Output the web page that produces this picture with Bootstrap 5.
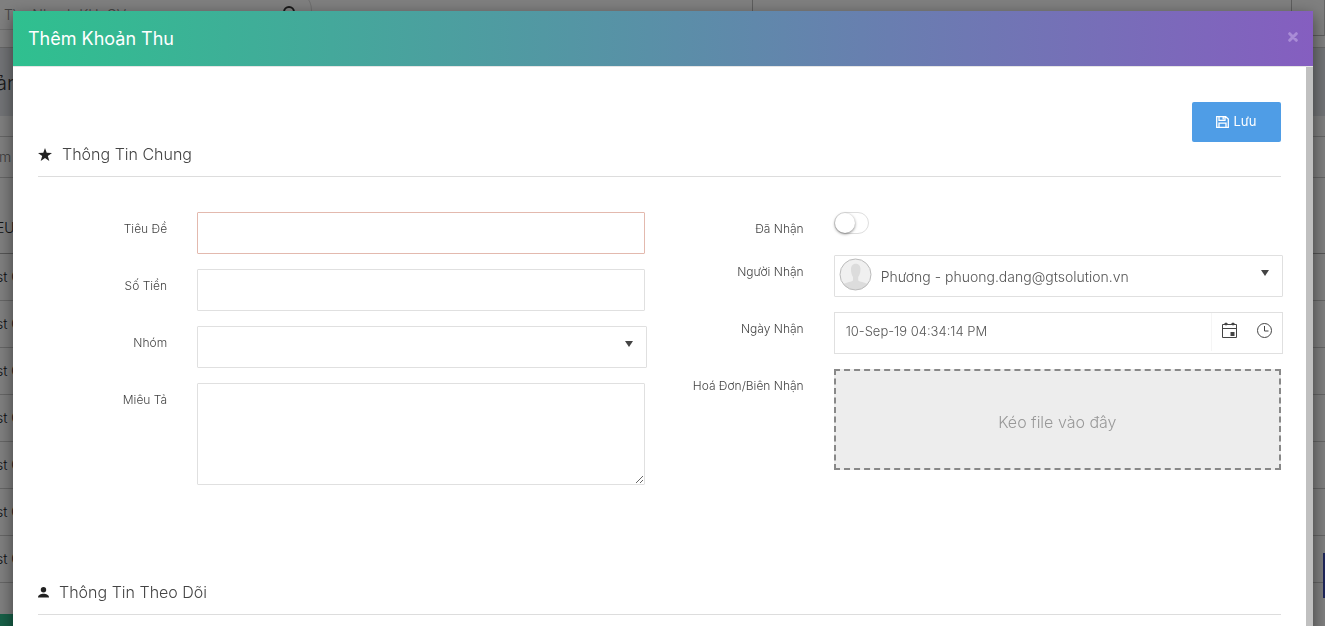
<!DOCTYPE html>
<html lang="vi">
<head>
<meta charset="utf-8">
<meta name="viewport" content="width=device-width, initial-scale=1">
<title>Thêm Khoản Thu</title>
<link href="https://cdn.jsdelivr.net/npm/bootstrap@5.3.0/dist/css/bootstrap.min.css" rel="stylesheet">
<style>
  body { font-family: Inter, "Open Sans", sans-serif; font-size: 14px; font-weight: 300; color: #333; }
  a, button, input, select, textarea { font-weight: inherit; }

  /* Page behind the dialog */
  .page-top { height: 48px; border-bottom: 1px solid #ccc; }
  .search-pill { width: 312px; height: 40px; margin-top: -10px; padding: 10px 12px 0 4px; border: 1px solid #ddd; border-left: 0; border-radius: 0 20px 20px 0; }
  .search-pill input { width: 100%; height: 26px; border: 0; padding: 0; background: none; }
  .search-pill input::placeholder { color: #888; }
  .top-cell { border-left: 1px solid #bbb; }
  .top-side { width: 573px; }
  .top-user { width: 34px; border-right: 1px solid #ccc; height: 36px; border-bottom: 1px solid #bbb; }
  .page-main { margin-left: -4px; }
  .page-title { height: 68px; background: #e4e7ec; font-size: 20px; padding-top: 20px; }
  .page-filter { height: 42px; margin-top: 20px; border: 1px solid #ccc; border-width: 1px 0; padding: 9px 3px; color: #777; }
  .page-table { margin: 0; --bs-table-bg: transparent; }
  .page-table th, .page-table td { height: 47px; padding: 0; vertical-align: middle; border-bottom: 1px solid #ccc; }
  .page-table th { height: 75px; padding-top: 25px; font-weight: 300; border-bottom-color: #aaa; }
  .page-foot { margin-top: 31px; height: 40px; width: 60px; background: #2fc08f; }
  .chat-tab { right: 0; top: 553px; width: 2px; height: 45px; background: #3d4bb5; }

  /* Dialog */
  .income-modal { overflow: hidden; }
  .income-modal .modal-dialog { max-width: none; margin: 11px 12px 0 13px; }
  .income-modal .modal-content { border: 0; border-radius: 0; box-shadow: 0 5px 15px rgba(0,0,0,.5); color: #444; }
  .income-modal .modal-header { height: 56px; padding: 0 15px; border-bottom: 1px solid #e5e5e5; border-radius: 0; background: linear-gradient(90deg, #2fc08f, #855ec0) padding-box; }
  .income-modal .modal-title { font-size: 18px; font-weight: 400; color: #fff; }
  .close-x { border: 0; padding: 0 0 4px; background: none; line-height: 0; }
  .income-modal .modal-body { padding: 35px 25px 60px; border-right: 7px solid #c0c0c0; }
  .btn-save { width: 89px; height: 40px; padding: 0; border: 0; border-radius: 2px; background: #4f9de6; color: #fff; font-size: 13px; }
  .section-title { height: 35px; margin: 0; padding-bottom: 10px; gap: 10px; border-bottom: 1px solid #ddd; font-size: 16px; font-weight: 300; line-height: 24px; }
  .form-area { --bs-gutter-x: 30px; padding: 35px 0 80px; }
  .form-area .row { --bs-gutter-x: 30px; margin-bottom: 15px; }
  .field-label { padding-top: 8px; font-size: 12px; line-height: 18px; text-align: right; white-space: nowrap; }
  .field-box, .field-box:focus { height: 42px; padding: 0 11px; border: 1px solid #e0e0e0; border-radius: 1px; font-size: 14px; font-weight: 300; color: #555; background-color: #fff; box-shadow: none; }
  .field-error { border-color: #e3b9ae; }
  .field-wide { width: calc(100% + 2px); }
  .field-select { background-image: url("data:image/svg+xml,%3Csvg xmlns='http://www.w3.org/2000/svg' viewBox='0 0 8 6'%3E%3Cpath fill='%23444' d='M0 0h8L4 6z'/%3E%3C/svg%3E"); background-size: 8px 6px; background-position: right 13px top 14px; }
  textarea.field-box { height: 102px; }
  .person-pic { left: 20px; top: 3px; }
  .person-field { padding-left: 46px; }
  .toggle-row { height: 28px; }
  .toggle-box { appearance: none; display: block; width: 35px; height: 22px; margin: 0; border: 1px solid #ddd; border-radius: 11px; background: #fff; }
  .toggle-box::before { content: ""; display: block; width: 20px; height: 20px; border-radius: 50%; background: #fff; box-shadow: 0 1px 3px rgba(0,0,0,.5); }
  .date-field { border: 1px solid #e0e0e0; height: 42px; }
  .date-field input { border: 0; padding: 0 0 2px 11px; font-size: 13px; color: #555; min-width: 0; }
  .date-tools { width: 71px; height: 38px; border-left: 1px solid #f5f5f5; padding: 0 9px 4px 9px; }
  .date-tools button { border: 0; padding: 0; background: none; line-height: 0; }
  .drop-zone { height: 101px; padding-top: 4px; border: 2px dashed #888; background: #ededed; color: #999; font-size: 16px; }
</style>
</head>
<body class="overflow-hidden">
<div class="vh-100 overflow-hidden">
  <header class="page-top d-flex justify-content-between">
    <div class="search-pill d-flex">
      <input type="text" placeholder="Tìm Nhanh KH, CV" aria-label="Tìm nhanh">
      <svg width="18" height="18" viewBox="0 0 18 18" fill="none" stroke="#333" stroke-width="2" class="flex-shrink-0 mt-1"><circle cx="8" cy="7" r="5"/><path d="M12 11l5 5"/></svg>
    </div>
    <div class="top-side d-flex">
      <div class="top-cell flex-grow-1"></div>
      <div class="top-cell top-user"></div>
    </div>
  </header>
  <main class="page-main">
    <div class="page-title">ản Thu</div>
    <div class="page-filter">m</div>
    <table class="table page-table">
      <thead><tr><th>EU</th></tr></thead>
      <tbody>
        <tr><td>st C</td></tr><tr><td>st C</td></tr><tr><td>st C</td></tr><tr><td>st C</td></tr>
        <tr><td>st C</td></tr><tr><td>st C</td></tr><tr><td>st C</td></tr>
      </tbody>
    </table>
    <div class="page-foot"></div>
  </main>
  <div class="chat-tab position-absolute"></div>
</div>
<div class="modal-backdrop show"></div>

<div class="modal income-modal d-block" role="dialog" aria-labelledby="dialog-title">
  <div class="modal-dialog">
    <div class="modal-content">
      <div class="modal-header">
        <h4 class="modal-title" id="dialog-title">Thêm Khoản Thu</h4>
        <button type="button" class="close-x ms-auto" aria-label="Đóng">
          <svg width="10" height="10" viewBox="0 0 10 10" stroke="#a98cd6" stroke-width="3" stroke-linecap="round"><path d="M1.700 1.700l6.600 6.600M8.300 1.700L1.700 8.300"/></svg>
        </button>
      </div>
      <form class="modal-body">
        <div class="d-flex justify-content-end">
          <button type="button" class="btn btn-save d-flex align-items-center justify-content-center gap-1">
            <svg width="13" height="12" viewBox="0 0 13 12" fill="none" stroke="#fff" stroke-width="1.300"><path d="M.7.7h9L12.300 3v8.300H.7zM3 .7v3.600h6V.7M3 11.300V7.200h7v4.100"/><path d="M7.200 1v2.400"/></svg>
            <span>Lưu</span>
          </button>
        </div>
        <h5 class="section-title d-flex align-items-center">
          <svg width="14" height="13" viewBox="0 0 14 13" fill="#222"><path d="M7 0l1.700 4.700 5.300.2-4.200 3.200L11.300 13 7 10.100 2.700 13l1.500-4.900L0 4.900l5.300-.2z"/></svg>
          Thông Tin Chung
        </h5>
        <div class="row form-area">
          <div class="col-6">
            <div class="row">
              <label class="col-3 field-label" for="f-title">Tiêu Đề</label>
              <div class="col-9"><input id="f-title" type="text" class="form-control field-box field-error"></div>
            </div>
            <div class="row">
              <label class="col-3 field-label" for="f-amount">Số Tiền</label>
              <div class="col-9"><input id="f-amount" type="text" class="form-control field-box"></div>
            </div>
            <div class="row">
              <label class="col-3 field-label" for="f-group">Nhóm</label>
              <div class="col-9"><select id="f-group" class="form-select field-box field-select field-wide"><option></option></select></div>
            </div>
            <div class="row">
              <label class="col-3 field-label" for="f-desc">Miêu Tả</label>
              <div class="col-9"><textarea id="f-desc" class="form-control field-box"></textarea></div>
            </div>
          </div>
          <div class="col-6">
            <div class="row toggle-row">
              <label class="col-3 field-label" for="f-done">Đã Nhận</label>
              <div class="col-9"><input id="f-done" type="checkbox" role="switch" class="toggle-box"></div>
            </div>
            <div class="row">
              <label class="col-3 field-label" for="f-person">Người Nhận</label>
              <div class="col-9 position-relative">
                <select id="f-person" class="form-select field-box field-select field-wide person-field"><option>Phương - phuong.dang@gtsolution.vn</option></select>
                <svg class="person-pic position-absolute" width="33" height="33" viewBox="0 0 33 33"><defs><clipPath id="pic-clip"><circle cx="16.500" cy="16.500" r="15.500"/></clipPath></defs><circle cx="16.500" cy="16.500" r="15.500" fill="#f0f0f0"/><g clip-path="url(#pic-clip)" fill="#dcdcdc"><path d="M12 11c0-7 9.500-7 9.500 0 0 4-1 6-2.300 8v3.500c3 2 8 1.500 11 5V33H3v-5.500c3-3.500 8-3 11-5V19c-1.200-2-2-4-2-8z"/></g><circle cx="16.500" cy="16.500" r="15.500" fill="none" stroke="#bbb"/></svg>
              </div>
            </div>
            <div class="row">
              <label class="col-3 field-label" for="f-date">Ngày Nhận</label>
              <div class="col-9">
                <div class="date-field field-wide d-flex">
                  <input id="f-date" type="text" class="flex-grow-1" value="10-Sep-19 04:34:14 PM">
                  <div class="date-tools d-flex align-items-center justify-content-between">
                    <button type="button" aria-label="Chọn ngày"><svg width="17" height="17" viewBox="0 0 17 17" fill="none" stroke="#444"><path d="M1.500 2.500h14v13h-14zM1.500 6.500h14"/><path d="M3.500 2h3M10.500 2h3" stroke-width="2"/><path d="M5 .5v3M12 .5v3"/><path d="M9.500 10h4v4h-4z" fill="#444" stroke="none"/></svg></button>
                    <button type="button" aria-label="Chọn giờ"><svg width="17" height="17" viewBox="0 0 17 17" fill="none" stroke="#444"><circle cx="8.500" cy="8.500" r="7"/><path d="M8.500 4v5h4"/></svg></button>
                  </div>
                </div>
              </div>
            </div>
            <div class="row">
              <span class="col-3 field-label">Hoá Đơn/Biên Nhận</span>
              <div class="col-9"><div class="drop-zone d-flex align-items-center justify-content-center">Kéo file vào đây</div></div>
            </div>
          </div>
        </div>
        <h5 class="section-title d-flex align-items-center">
          <svg width="11" height="11" viewBox="0 0 11 11" fill="#222"><circle cx="5.500" cy="2.700" r="2.700"/><path d="M0 10.500c0-5 11-5 11 0z"/></svg>
          Thông Tin Theo Dõi
        </h5>
      </form>
    </div>
  </div>
</div>
<script src="https://cdn.jsdelivr.net/npm/bootstrap@5.3.0/dist/js/bootstrap.bundle.min.js"></script>
</body>
</html>
